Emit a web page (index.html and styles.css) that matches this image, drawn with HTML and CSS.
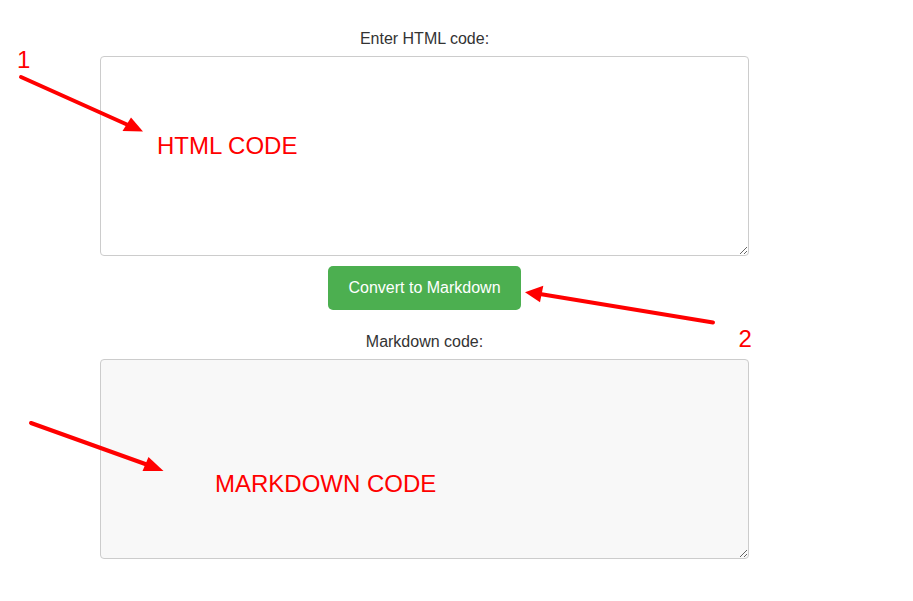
FILE: index.html
```html
<!DOCTYPE html>
<html lang="en">

<head>
    <meta charset="UTF-8">
    <meta name="viewport" content="width=device-width, initial-scale=1.0">
    <title>HTML to Markdown</title>
    <link rel="stylesheet" href="styles.css">
</head>

<body>
    <div class="container">
        <label class="field-label" for="html-input">Enter HTML code:</label>
        <textarea id="html-input" class="code-box"></textarea>
        <div class="actions">
            <button class="convert-btn" id="convert">Convert to Markdown</button>
        </div>
        <label class="field-label" for="md-output">Markdown code:</label>
        <textarea id="md-output" class="code-box output"></textarea>
    </div>

    <!-- annotations drawn over the page -->
    <svg class="notes" width="913" height="601" viewBox="0 0 913 601">
        <g class="arrow">
            <line x1="21" y1="77" x2="128" y2="125" />
            <polygon points="143,131.5 122.5,131 131,117.5" />
            <line x1="713" y1="322.5" x2="540" y2="294" />
            <polygon points="525,292.3 543.3,285.7 540,302.3" />
            <line x1="31" y1="423" x2="148" y2="465" />
            <polygon points="163.5,471 142.5,471 148.5,457" />
        </g>
        <text x="17" y="68.3">1</text>
        <text x="157" y="154">HTML CODE</text>
        <text x="738.5" y="346.7">2</text>
        <text x="215" y="492.3">MARKDOWN CODE</text>
    </svg>
</body>

</html>
```

FILE: styles.css
```css
body {
    margin: 0;
    font-family: "Liberation Sans", Arial, sans-serif;
    color: #333;
    background: #fff;
}

.container {
    width: 649px;
    margin-left: 100px;
    padding-top: 30px;
}

.field-label {
    display: block;
    text-align: center;
    font-size: 16px;
    line-height: 18px;
    margin-bottom: 8px;
}

.code-box {
    display: block;
    box-sizing: border-box;
    width: 100%;
    height: 200px;
    margin: 0;
    padding: 10px;
    border: 1px solid #ccc;
    border-radius: 4px;
    background: #fff;
    font-family: "Liberation Mono", monospace;
    font-size: 14px;
}

.code-box.output {
    background: #f8f8f8;
}

.actions {
    text-align: center;
    margin: 10px 0 23px;
}

.convert-btn {
    display: inline-block;
    height: 44px;
    padding: 0 20px;
    border: none;
    border-radius: 5px;
    background: #4caf50;
    color: #fff;
    font-family: "Liberation Sans", Arial, sans-serif;
    font-size: 16px;
    line-height: 20px;
    cursor: pointer;
}

.notes {
    position: absolute;
    top: 0;
    left: 0;
    pointer-events: none;
}

.notes .arrow line {
    stroke: #ff0000;
    stroke-width: 4;
    stroke-linecap: round;
}

.notes .arrow polygon {
    fill: #ff0000;
}

.notes text {
    fill: #ff0000;
    font-family: "Liberation Sans", Arial, sans-serif;
    font-size: 24px;
}
```
